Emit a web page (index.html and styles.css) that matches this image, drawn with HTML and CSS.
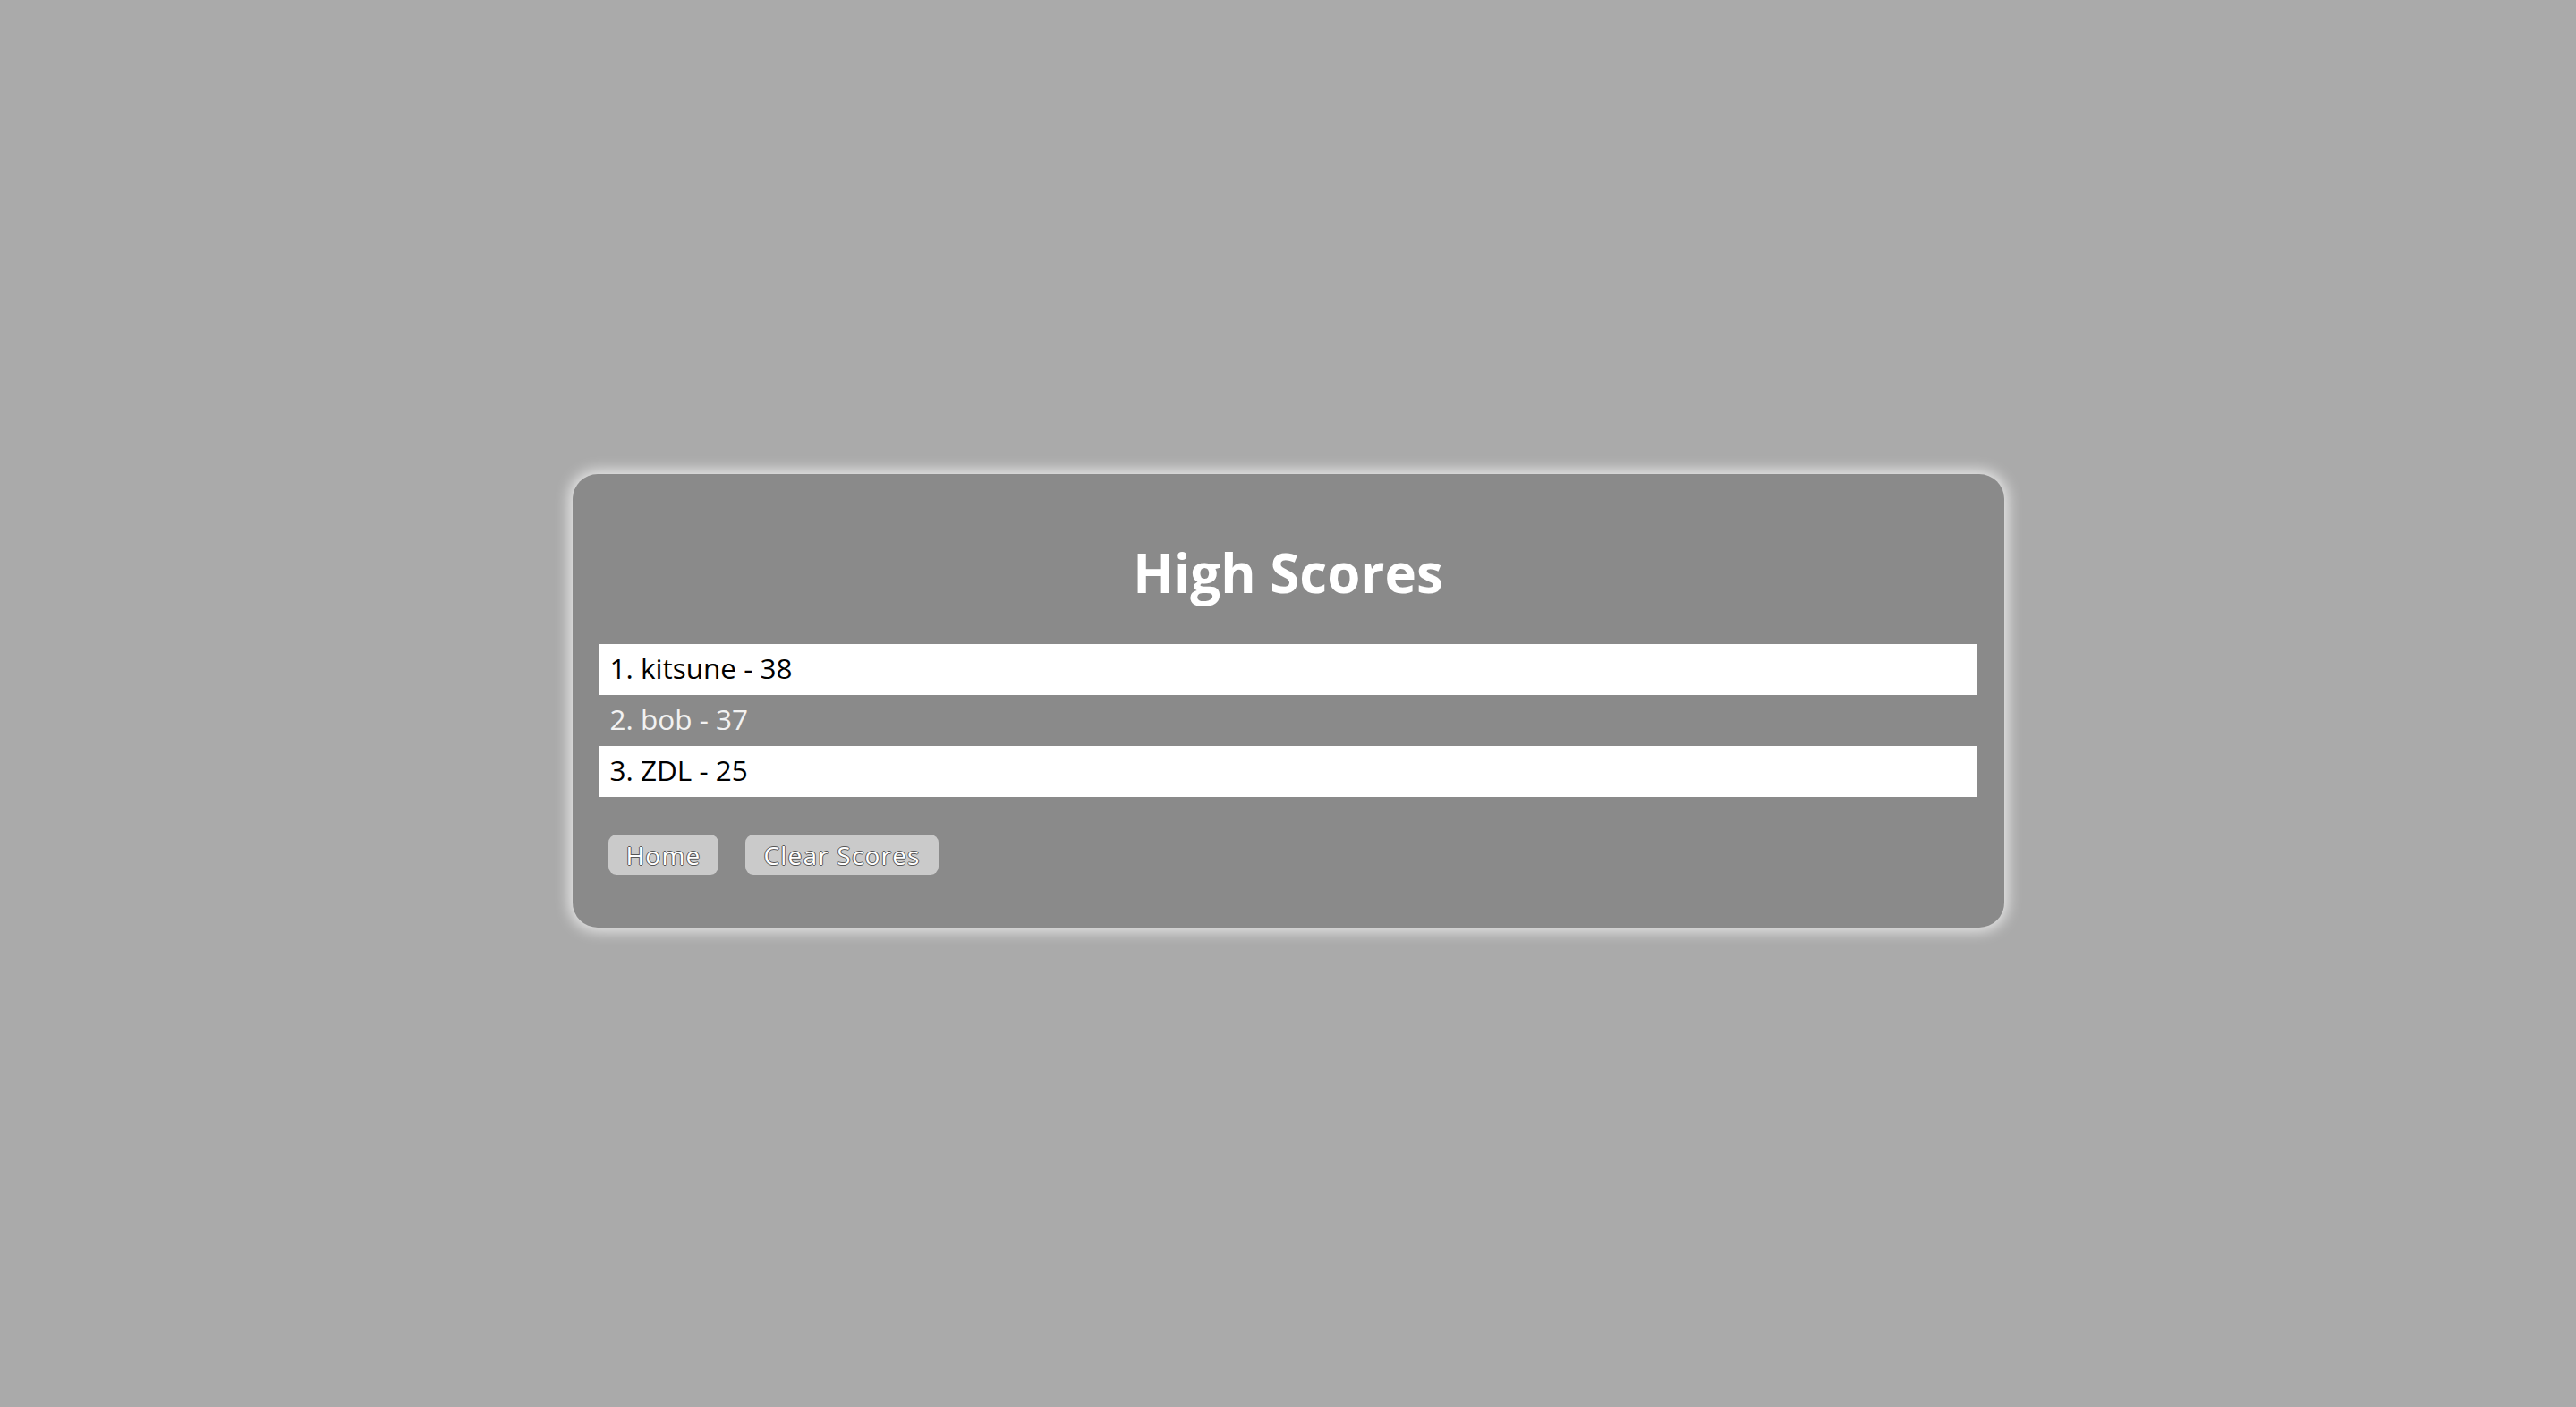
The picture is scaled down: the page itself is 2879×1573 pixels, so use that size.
FILE: index.html
```html
<!DOCTYPE html>
<html lang="en">
<head>
  <meta charset="UTF-8" />
  <meta name="viewport" content="width=device-width, initial-scale=1.0"/>
  <title>High Scores</title>
  <link rel="stylesheet" href="styles.css">
</head>
<body>
  <div class="container">
    <h1>High Scores</h1>

    <ul id="scores" class="scores">
      <li>1. kitsune - 38</li>
      <li>2. bob - 37</li>
      <li>3. ZDL - 25</li>
    </ul>

    <div class="actions">
      <button class="button">Home</button>
      <button class="button">Clear Scores</button>
    </div>
  </div>
</body>
</html>
```

FILE: styles.css
```css
body {
  font-family: "Open Sans", "DejaVu Sans", sans-serif;
  background-color: #aaaaaa;
  display: flex;
  justify-content: center;
  align-items: center;
  height: 100vh;
  margin: 0;
}

.container {
  background: #8a8a8a;
  width: 1600px;
  padding: 30px 30px 59px;
  margin-bottom: 6px;
  border-radius: 28px;
  box-shadow: 0 0 16px 4px rgba(255, 255, 255, 0.75);
  box-sizing: border-box;
}

h1 {
  text-align: center;
  font-size: 60px;
  line-height: 80px;
  font-weight: 700;
  color: #fff;
  margin: 40px 0;
}

.scores {
  list-style: none;
  margin: 0;
  padding: 0;
}

.scores li {
  height: 57px;
  line-height: 54px;
  padding: 0 12px;
  font-size: 31.5px;
  color: #f2f2f2;
}

.scores li:nth-child(odd) {
  background: #fff;
  color: #000;
}

.actions {
  display: flex;
  gap: 30px;
  margin: 42px 10px 0;
}

.button {
  height: 45px;
  padding: 0 20px;
  font-family: "Open Sans", "DejaVu Sans", sans-serif;
  font-size: 28px;
  letter-spacing: 1.2px;
  line-height: 42px;
  color: #fff;
  background-color: #cacaca;
  border: none;
  border-radius: 9px;
  text-shadow: -1px 0 #555, 1px 0 #555, 0 -1px #555, 0 1px #555;
  cursor: pointer;
}
```
